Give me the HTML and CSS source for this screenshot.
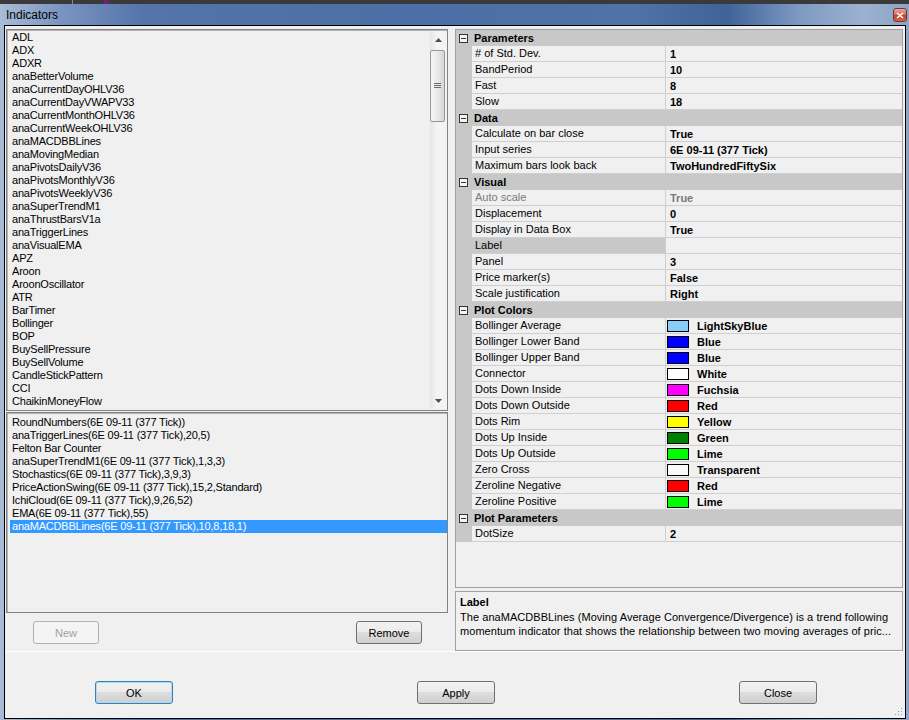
FILE: index.html
```html
<!DOCTYPE html>
<html lang="en">
<head>
    <meta charset="UTF-8">
    <title>Indicators</title>
    <link rel="stylesheet" href="styles.css">
</head>
<body>
    <div class="window">
        <div class="top-strip"><span class="strip-line"></span><span class="strip-mark"></span></div>
        <div class="titlebar">
            <span class="title">Indicators</span>
            <span class="close-btn">
                <svg width="8" height="7" viewBox="0 0 8 7"><path d="M1 1 L7 6 M7 1 L1 6" stroke="#fff" stroke-width="1.6"/></svg>
            </span>
        </div>
        <div class="client">
            <div class="main">
                <div class="left">
                    <div class="listbox list-top">
                        <div class="items">
                            <div class="item">ADL</div>
                            <div class="item">ADX</div>
                            <div class="item">ADXR</div>
                            <div class="item">anaBetterVolume</div>
                            <div class="item">anaCurrentDayOHLV36</div>
                            <div class="item">anaCurrentDayVWAPV33</div>
                            <div class="item">anaCurrentMonthOHLV36</div>
                            <div class="item">anaCurrentWeekOHLV36</div>
                            <div class="item">anaMACDBBLines</div>
                            <div class="item">anaMovingMedian</div>
                            <div class="item">anaPivotsDailyV36</div>
                            <div class="item">anaPivotsMonthlyV36</div>
                            <div class="item">anaPivotsWeeklyV36</div>
                            <div class="item">anaSuperTrendM1</div>
                            <div class="item">anaThrustBarsV1a</div>
                            <div class="item">anaTriggerLines</div>
                            <div class="item">anaVisualEMA</div>
                            <div class="item">APZ</div>
                            <div class="item">Aroon</div>
                            <div class="item">AroonOscillator</div>
                            <div class="item">ATR</div>
                            <div class="item">BarTimer</div>
                            <div class="item">Bollinger</div>
                            <div class="item">BOP</div>
                            <div class="item">BuySellPressure</div>
                            <div class="item">BuySellVolume</div>
                            <div class="item">CandleStickPattern</div>
                            <div class="item">CCI</div>
                            <div class="item">ChaikinMoneyFlow</div>
                        </div>
                        <div class="scrollbar">
                            <div class="sb-arrow"><svg width="7" height="4" viewBox="0 0 7 4"><path d="M0 4 L3.5 0 L7 4 Z" fill="#4d4d4d"/></svg></div>
                            <div class="sb-track">
                                <div class="sb-thumb">
                                    <svg width="7" height="6" viewBox="0 0 7 6"><path d="M0 0.5 H7 M0 2.5 H7 M0 4.5 H7" stroke="#6a6a6a" stroke-width="1"/></svg>
                                </div>
                            </div>
                            <div class="sb-arrow"><svg width="7" height="4" viewBox="0 0 7 4"><path d="M0 0 L3.5 4 L7 0 Z" fill="#4d4d4d"/></svg></div>
                        </div>
                    </div>
                    <div class="listbox list-bottom">
                        <div class="items">
                            <div class="item">RoundNumbers(6E 09-11 (377 Tick))</div>
                            <div class="item">anaTriggerLines(6E 09-11 (377 Tick),20,5)</div>
                            <div class="item">Felton Bar Counter</div>
                            <div class="item">anaSuperTrendM1(6E 09-11 (377 Tick),1,3,3)</div>
                            <div class="item">Stochastics(6E 09-11 (377 Tick),3,9,3)</div>
                            <div class="item">PriceActionSwing(6E 09-11 (377 Tick),15,2,Standard)</div>
                            <div class="item">IchiCloud(6E 09-11 (377 Tick),9,26,52)</div>
                            <div class="item">EMA(6E 09-11 (377 Tick),55)</div>
                            <div class="item selected">anaMACDBBLines(6E 09-11 (377 Tick),10,8,18,1)</div>
                        </div>
                    </div>
                    <div class="list-buttons">
                        <button class="btn btn-small" disabled>New</button>
                        <button class="btn btn-small">Remove</button>
                    </div>
                </div>
                <div class="splitter"></div>
                <div class="right">
                    <div class="grid">
                        <div class="cat-row"><span class="cat-icon"></span><span class="cat-name">Parameters</span></div>
                        <div class="prop-row"><span class="margin"></span><span class="name"># of Std. Dev.</span><span class="value">1</span></div>
                        <div class="prop-row"><span class="margin"></span><span class="name">BandPeriod</span><span class="value">10</span></div>
                        <div class="prop-row"><span class="margin"></span><span class="name">Fast</span><span class="value">8</span></div>
                        <div class="prop-row"><span class="margin"></span><span class="name">Slow</span><span class="value">18</span></div>

                        <div class="cat-row"><span class="cat-icon"></span><span class="cat-name">Data</span></div>
                        <div class="prop-row"><span class="margin"></span><span class="name">Calculate on bar close</span><span class="value">True</span></div>
                        <div class="prop-row"><span class="margin"></span><span class="name">Input series</span><span class="value">6E 09-11 (377 Tick)</span></div>
                        <div class="prop-row"><span class="margin"></span><span class="name">Maximum bars look back</span><span class="value">TwoHundredFiftySix</span></div>

                        <div class="cat-row"><span class="cat-icon"></span><span class="cat-name">Visual</span></div>
                        <div class="prop-row readonly"><span class="margin"></span><span class="name">Auto scale</span><span class="value">True</span></div>
                        <div class="prop-row"><span class="margin"></span><span class="name">Displacement</span><span class="value">0</span></div>
                        <div class="prop-row"><span class="margin"></span><span class="name">Display in Data Box</span><span class="value">True</span></div>
                        <div class="prop-row active"><span class="margin"></span><span class="name">Label</span><span class="value"></span></div>
                        <div class="prop-row"><span class="margin"></span><span class="name">Panel</span><span class="value">3</span></div>
                        <div class="prop-row"><span class="margin"></span><span class="name">Price marker(s)</span><span class="value">False</span></div>
                        <div class="prop-row"><span class="margin"></span><span class="name">Scale justification</span><span class="value">Right</span></div>

                        <div class="cat-row"><span class="cat-icon"></span><span class="cat-name">Plot Colors</span></div>
                        <div class="prop-row"><span class="margin"></span><span class="name">Bollinger Average</span><span class="value"><i class="swatch sw-lightskyblue"></i>LightSkyBlue</span></div>
                        <div class="prop-row"><span class="margin"></span><span class="name">Bollinger Lower Band</span><span class="value"><i class="swatch sw-blue"></i>Blue</span></div>
                        <div class="prop-row"><span class="margin"></span><span class="name">Bollinger Upper Band</span><span class="value"><i class="swatch sw-blue"></i>Blue</span></div>
                        <div class="prop-row"><span class="margin"></span><span class="name">Connector</span><span class="value"><i class="swatch sw-white"></i>White</span></div>
                        <div class="prop-row"><span class="margin"></span><span class="name">Dots Down Inside</span><span class="value"><i class="swatch sw-fuchsia"></i>Fuchsia</span></div>
                        <div class="prop-row"><span class="margin"></span><span class="name">Dots Down Outside</span><span class="value"><i class="swatch sw-red"></i>Red</span></div>
                        <div class="prop-row"><span class="margin"></span><span class="name">Dots Rim</span><span class="value"><i class="swatch sw-yellow"></i>Yellow</span></div>
                        <div class="prop-row"><span class="margin"></span><span class="name">Dots Up Inside</span><span class="value"><i class="swatch sw-green"></i>Green</span></div>
                        <div class="prop-row"><span class="margin"></span><span class="name">Dots Up Outside</span><span class="value"><i class="swatch sw-lime"></i>Lime</span></div>
                        <div class="prop-row"><span class="margin"></span><span class="name">Zero Cross</span><span class="value"><i class="swatch sw-transparent"></i>Transparent</span></div>
                        <div class="prop-row"><span class="margin"></span><span class="name">Zeroline Negative</span><span class="value"><i class="swatch sw-red"></i>Red</span></div>
                        <div class="prop-row"><span class="margin"></span><span class="name">Zeroline Positive</span><span class="value"><i class="swatch sw-lime"></i>Lime</span></div>

                        <div class="cat-row"><span class="cat-icon"></span><span class="cat-name">Plot Parameters</span></div>
                        <div class="prop-row"><span class="margin"></span><span class="name">DotSize</span><span class="value">2</span></div>
                    </div>
                    <div class="description">
                        <div class="desc-title">Label</div>
                        <div class="desc-text">The anaMACDBBLines (Moving Average Convergence/Divergence) is a trend following<br>momentum indicator that shows the relationship between two moving averages of pric...</div>
                    </div>
                </div>
            </div>
            <div class="footer">
                <button class="btn btn-wide btn-default">OK</button>
                <button class="btn btn-wide">Apply</button>
                <button class="btn btn-wide">Close</button>
                <svg class="grip" width="8" height="8" viewBox="0 0 8 8">
                    <rect x="6" y="0" width="1" height="1" fill="#9a9a9a"/>
                    <rect x="3" y="3" width="1" height="1" fill="#9a9a9a"/>
                    <rect x="6" y="3" width="1" height="1" fill="#9a9a9a"/>
                    <rect x="0" y="6" width="1" height="1" fill="#9a9a9a"/>
                    <rect x="3" y="6" width="1" height="1" fill="#9a9a9a"/>
                    <rect x="6" y="6" width="1" height="1" fill="#9a9a9a"/>
                </svg>
            </div>
        </div>
    </div>
</body>
</html>
```

FILE: styles.css
```css
body {
    margin: 0;
    background: #000;
    font-family: "Liberation Sans", Arial, sans-serif;
    font-size: 11px;
    color: #000;
    overflow: hidden;
}
.window {
    width: 909px;
    height: 720px;
    display: flex;
    flex-direction: column;
    background: linear-gradient(90deg, #a9bcd6 0%, #7893bf 7%, #5474aa 16%, #4b6fa6 45%, #4f72a8 70%, #3f6399 80%, #7e9ac2 88%, #9bb1cf 95%, #8ca4c8 100%);
}
.top-strip {
    height: 4px;
    display: flex;
    background: #3a3a3a;
}
.strip-line {
    width: 1px;
    margin-left: 72px;
    background: #8a8a8a;
}
.strip-mark {
    width: 4px;
    margin-left: 31px;
    background: #74207a;
}
.titlebar {
    height: 21px;
    display: flex;
    align-items: center;
    justify-content: space-between;
    padding: 0 2px 0 6px;
}
.title {
    font-size: 12px;
    color: #000;
}
.close-btn {
    width: 14px;
    height: 14px;
    box-sizing: border-box;
    border: 1px solid #6e3a34;
    border-radius: 3px;
    background: linear-gradient(180deg, #e9a99c 0%, #d86a55 45%, #c7412b 55%, #d2624c 100%);
    display: flex;
    align-items: center;
    justify-content: center;
    margin-top: 1px;
}
.client {
    flex: 1;
    margin: 0 3px 1px 4px;
    border: 1px solid #000;
    background: #f0f0f0;
    display: flex;
    flex-direction: column;
}
.main {
    height: 625px;
    display: flex;
    border-bottom: 1px solid #fff;
}
.left {
    width: 443px;
    box-sizing: border-box;
    padding: 3px 0 0 1px;
    display: flex;
    flex-direction: column;
}
.listbox {
    width: 442px;
    box-sizing: border-box;
    border: 1px solid #828282;
    box-shadow: inset 1px 1px 0 #b4b4b4;
    background: #f0f0f0;
    display: flex;
    overflow: hidden;
}
.list-top {
    height: 382px;
    padding: 1px 0 1px 0;
}
.list-bottom {
    height: 201px;
    margin-top: 1px;
    padding: 3px 0 0 0;
}
.items {
    flex: 1;
    overflow: hidden;
    padding-left: 3px;
}
.item {
    height: 13px;
    line-height: 13px;
    padding-left: 2px;
    white-space: nowrap;
    letter-spacing: -0.2px;
}
.item.selected {
    background: #3399ff;
    color: #fff;
}
.scrollbar {
    width: 17px;
    display: flex;
    flex-direction: column;
    background: linear-gradient(90deg, #e6e6e6 0%, #f4f4f4 40%, #f2f2f2 100%);
}
.sb-arrow {
    height: 17px;
    display: flex;
    align-items: center;
    justify-content: center;
}
.sb-track {
    flex: 1;
    padding-top: 2px;
}
.sb-thumb {
    width: 15px;
    height: 72px;
    box-sizing: border-box;
    border: 1px solid #979797;
    border-radius: 2px;
    background: linear-gradient(90deg, #f5f5f5 0%, #e9e9e9 50%, #d6d6d6 100%);
    display: flex;
    align-items: center;
    justify-content: center;
}
.list-buttons {
    display: flex;
    justify-content: space-between;
    padding: 8px 26px 0 27px;
}
.btn {
    height: 23px;
    box-sizing: border-box;
    border: 1px solid #707070;
    border-radius: 3px;
    background: linear-gradient(180deg, #f2f2f2 0%, #ebebeb 49%, #dddddd 50%, #cfcfcf 100%);
    font-family: "Liberation Sans", Arial, sans-serif;
    font-size: 11px;
    color: #000;
    padding: 0;
}
.btn-small {
    width: 66px;
}
.btn:disabled {
    border-color: #adb2b5;
    background: #f4f4f4;
    color: #a0a0a0;
}
.btn-wide {
    width: 78px;
}
.btn-default {
    border-color: #3c7fb1;
    box-shadow: inset 0 0 0 1px #a8dcf6;
}
.splitter {
    width: 7px;
}
.right {
    width: 448px;
    padding-top: 3px;
    display: flex;
    flex-direction: column;
}
.grid {
    height: 559px;
    box-sizing: border-box;
    border: 1px solid #a0a0a0;
    background: #f0f0f0;
    overflow: hidden;
}
.cat-row {
    height: 16px;
    display: flex;
    align-items: center;
    background: #c8c8c8;
}
.cat-icon {
    width: 9px;
    height: 9px;
    box-sizing: border-box;
    margin: 0 4px 0 3px;
    border: 1px solid #333;
    background: linear-gradient(#333, #333) center / 5px 1px no-repeat, #f4f4f4;
}
.cat-name {
    font-weight: bold;
    padding-left: 2px;
}
.prop-row {
    height: 16px;
    display: flex;
}
.prop-row .margin {
    width: 16px;
    background: #c8c8c8;
}
.prop-row .name {
    width: 194px;
    box-sizing: border-box;
    padding-left: 3px;
    border-right: 1px solid #cfcfcf;
    border-bottom: 1px solid #cfcfcf;
    line-height: 15px;
    white-space: nowrap;
}
.prop-row .value {
    flex: 1;
    display: flex;
    align-items: center;
    padding-left: 4px;
    border-bottom: 1px solid #cfcfcf;
    font-weight: bold;
    white-space: nowrap;
}
.prop-row.readonly {
    color: #7a7a7a;
}
.prop-row.active .name {
    background: #c8c8c8;
}
.swatch {
    width: 22px;
    height: 12px;
    box-sizing: border-box;
    border: 1px solid #000;
    margin: 0 8px 0 -3px;
}
.sw-lightskyblue { background: #87cefa; }
.sw-blue { background: #0000ff; }
.sw-white { background: #fff; }
.sw-fuchsia { background: #ff00ff; }
.sw-red { background: #ff0000; }
.sw-yellow { background: #ffff00; }
.sw-green { background: #008000; }
.sw-lime { background: #00ff00; }
.sw-transparent { background: #fafafa; }
.description {
    height: 60px;
    box-sizing: border-box;
    margin-top: 3px;
    border: 1px solid #a0a0a0;
    padding: 3px 4px 0 4px;
}
.desc-title {
    font-weight: bold;
    line-height: 15px;
}
.desc-text {
    line-height: 14px;
    white-space: nowrap;
    letter-spacing: 0.05px;
}
.footer {
    flex: 1;
    position: relative;
    display: flex;
    gap: 244px;
    padding: 29px 0 0 90px;
}
.grip {
    position: absolute;
    right: 2px;
    bottom: 2px;
}
```
